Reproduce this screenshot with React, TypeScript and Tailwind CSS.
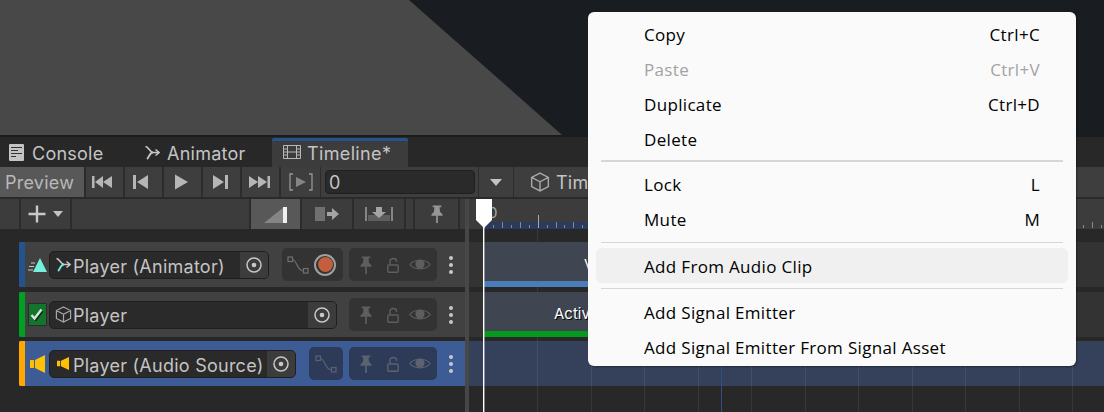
import React from 'react';

const uiFont = { fontFamily: 'Inter, "Liberation Sans", sans-serif' };

const Svg = ({ w, h, children, className }: { w: number; h: number; children: React.ReactNode; className?: string }) => (
  <svg width={w} height={h} viewBox={`0 0 ${w} ${h}`} fill="none" className={className}>
    {children}
  </svg>
);

const ConsoleIcon = () => (
  <Svg w={15} h={17}>
    <rect x="0" y="0" width="15" height="17" rx="1" fill="#c4c4c4" />
    <path d="M2 3.5H13M2 6.5H9M2 9.5H13M2 12.5H7" stroke="#333" strokeWidth="1.2" />
  </Svg>
);

const AnimatorIcon = ({ lower = '#c4c4c4', size = 15 }: { lower?: string; size?: number }) => (
  <svg width={size} height={size} viewBox="0 0 15 15" fill="none">
    <path d="M0.5 1.5C3.5 1.5 5 7.5 8 7.5H14" stroke="#c8c8c8" strokeWidth="1.6" />
    <path d="M2 14C4 12.5 4.5 7.5 8 7.5" stroke={lower} strokeWidth="1.9" />
    <path d="M10.5 4.5L14 7.5L10.5 10.5" stroke="#c8c8c8" strokeWidth="1.5" />
  </svg>
);

const FilmIcon = () => (
  <Svg w={18} h={16}>
    <path d="M0.5 1.5H17.5V14.5H0.5ZM4.5 1.5V14.5M13.5 1.5V14.5M4.5 8H13.5M0.5 5H4.5M0.5 8H4.5M0.5 11H4.5M13.5 5H17.5M13.5 8H17.5M13.5 11H17.5" stroke="#b8b8b8" strokeWidth="1" />
  </Svg>
);

const CubeIcon = ({ size = 18, color = '#a8a8a8' }: { size?: number; color?: string }) => (
  <svg width={size} height={size} viewBox="0 0 18 18" fill="none">
    <path d="M9 1L16.5 4.8V13.2L9 17L1.5 13.2V4.8ZM1.5 4.8L9 8.8L16.5 4.8M9 8.8V17" stroke={color} strokeWidth="1.3" />
  </svg>
);

const Transport = ({ d }: { d: string }) => (
  <Svg w={22} h={16}>
    <path d={d} fill="#b6b6b6" />
  </Svg>
);

const transportButtons = [
  { d: 'M0 2H2.5V14H0ZM3 8L11 2V14ZM11 8L20 2V14Z' },
  { d: 'M2 1H5V15H2ZM6 8L17 1V15Z' },
  { d: 'M5 0.5L18 8L5 15.5Z' },
  { d: 'M4 1L15 8L4 15ZM16 1H19V15H16Z' },
  { d: 'M1 2L10 8L1 14ZM10 2L19 8L10 14ZM19.5 2H22V14H19.5Z' },
];

const PinIcon = ({ color = '#5e5e5e', w = 12, h = 18 }: { color?: string; w?: number; h?: number }) => (
  <svg width={w} height={h} viewBox="0 0 14 21" fill="none">
    <path d="M2 0.5H12V2.5H10L10.5 8L13.5 11V12.5H0.5V11L3.5 8L4 2.5H2Z" fill={color} />
    <rect x="6" y="12" width="2" height="9" fill={color} />
  </svg>
);

const LockIcon = ({ color = '#5e5e5e' }: { color?: string }) => (
  <Svg w={12} h={16}>
    <path d="M3 7.5V3.8C3 0.8 9.5 0.8 9.5 3.8V5" stroke={color} strokeWidth="1.4" />
    <rect x="0.8" y="8" width="10.4" height="7.2" rx="1" stroke={color} strokeWidth="1.4" />
  </Svg>
);

const EyeIcon = ({ color = '#5e5e5e' }: { color?: string }) => (
  <Svg w={22} h={13}>
    <path d="M0.8 6.5C5 0.8 17 0.8 21.2 6.5C17 12.2 5 12.2 0.8 6.5Z" stroke={color} strokeWidth="1.2" />
    <circle cx="11" cy="6" r="4.6" fill={color} />
  </Svg>
);

const CurveIcon = ({ color = '#707070' }: { color?: string }) => (
  <Svg w={22} h={18}>
    <rect x="1" y="1" width="4.5" height="4.5" stroke={color} strokeWidth="1.2" />
    <rect x="16.5" y="12.5" width="4.5" height="4.5" stroke={color} strokeWidth="1.2" />
    <path d="M5.5 3.5C10 4 10 15 16.5 15" stroke={color} strokeWidth="1.2" />
  </Svg>
);

const TargetDot = () => (
  <Svg w={16} h={16}>
    <circle cx="8" cy="8" r="7" stroke="#c8c8c8" strokeWidth="1.5" />
    <circle cx="8" cy="8" r="2.3" fill="#c8c8c8" />
  </Svg>
);

const Speaker = ({ w, h }: { w: number; h: number }) => (
  <svg width={w} height={h} viewBox="0 0 15 16" fill="none" preserveAspectRatio="none">
    <path d="M0 4.5H4V11.5H0Z" fill="#ffc107" />
    <path d="M5 4.5L15 0V16L5 11.5Z" fill="#ffc107" />
  </svg>
);

const tracks = [
  {
    name: 'Player (Animator)',
    strip: 'bg-[#24548c]',
    row: 'bg-[#414141]',
    group: 'bg-[#333333]',
    iconTone: '#5e5e5e',
    field: 'w-[220px]',
    text: 'pt-[4px]',
    curve: 'w-[61px] pl-[5px]',
    record: true,
    gap: '',
    timeline: 'bg-[#333333]',
    clip: { text: 'V', pad: 'pl-[100px] pt-[8px]', bar: 'bg-[#4a7cb8]' },
  },
  {
    name: 'Player',
    strip: 'bg-[#00a023]',
    row: 'bg-[#414141]',
    group: 'bg-[#333333]',
    iconTone: '#5e5e5e',
    field: 'w-[288px]',
    text: 'pt-[2px]',
    curve: '',
    record: false,
    gap: 'mt-[5px]',
    timeline: 'bg-[#333333]',
    clip: { text: 'Active', pad: 'pl-[70px] pt-[6px]', bar: 'bg-[#059a1e]' },
  },
  {
    name: 'Player (Audio Source)',
    strip: 'bg-[#ffa800]',
    row: 'bg-[#3d5c96]',
    group: 'bg-[#2d3a58]',
    iconTone: '#5c6270',
    field: 'w-[247px]',
    text: 'pt-[4px]',
    curve: 'w-[34px] pl-[6px]',
    record: false,
    gap: 'mt-[4px]',
    timeline: 'bg-[#35415a]',
    clip: null,
  },
];

const TrackIcon = ({ index }: { index: number }) => {
  if (index === 0) {
    return (
      <Svg w={19} h={16}>
        <path d="M3 6H7M1 9.5H6M0 13H5" stroke="#c8c8c8" strokeWidth="1" />
        <path d="M12 1L19 15H5Z" fill="#75f0dc" />
      </Svg>
    );
  }
  if (index === 1) {
    return (
      <div className="w-[19px] h-[23px] bg-[#13752b] border border-[#2b2b2b] flex items-center justify-center">
        <Svg w={14} h={13}>
          <path d="M2.5 8.5L5.5 12L12.5 3" stroke="#0a2a12" strokeWidth="2.4" />
          <path d="M1.5 7L4.5 10.5L11.5 1.5" stroke="#d5e4d8" strokeWidth="2.4" />
        </Svg>
      </div>
    );
  }
  return <Speaker w={15} h={18} />;
};

const FieldIcon = ({ index }: { index: number }) => {
  if (index === 0) return <AnimatorIcon lower="#73ecd8" />;
  if (index === 1) return <CubeIcon size={17} />;
  return <Speaker w={12} h={13} />;
};

const TrackHeader = ({ track, index }: { track: (typeof tracks)[number]; index: number }) => (
  <div className={`flex items-center h-[45px] ml-[19px] ${track.row} ${track.gap}`}>
    <div className={`w-[6px] h-full rounded-l-[2px] shrink-0 ${track.strip}`} />
    <div className="w-[24px] flex items-center justify-center shrink-0">
      <TrackIcon index={index} />
    </div>
    <div className={`${track.field} h-[28px] shrink-0 flex items-center bg-[#2a2a2a] border border-[#1f1f1f] rounded-[5px] overflow-hidden`}>
      <div className="w-[23px] pl-[3px] flex items-center justify-center shrink-0">
        <FieldIcon index={index} />
      </div>
      <span className={`flex-1 ${track.text} text-[18px] tracking-[0.25px] text-[#c4c4c4] whitespace-nowrap`}>{track.name}</span>
      <div className="w-[28px] h-full bg-[#3c3c3c] flex items-center justify-center shrink-0">
        <TargetDot />
      </div>
    </div>
    <div className="flex-1" />
    {track.curve && (
      <div className={`${track.curve} h-[33px] mr-[6px] rounded-[5px] ${track.group} flex items-center gap-[5px] shrink-0`}>
        <CurveIcon color={index === 2 ? '#5c6270' : '#707070'} />
        {track.record && (
          <div className="w-[22px] h-[22px] rounded-full border-2 border-[#a0a0a0] flex items-center justify-center">
            <div className="w-[15px] h-[15px] rounded-full bg-[#c35f3c]" />
          </div>
        )}
      </div>
    )}
    <div className={`w-[88px] h-[33px] rounded-[5px] ${track.group} flex items-center pl-[11px] shrink-0`}>
      <PinIcon color={track.iconTone} />
      <div className="ml-[15px] flex">
        <LockIcon color={track.iconTone} />
      </div>
      <div className="ml-[10px] flex">
        <EyeIcon color={track.iconTone} />
      </div>
    </div>
    <div className="w-[28px] flex flex-col items-center gap-[3px] shrink-0">
      <div className="w-[4px] h-[4px] rounded-full bg-[#c8c8c8]" />
      <div className="w-[4px] h-[4px] rounded-full bg-[#c8c8c8]" />
      <div className="w-[4px] h-[4px] rounded-full bg-[#c8c8c8]" />
    </div>
  </div>
);

const TrackLane = ({ track }: { track: (typeof tracks)[number] }) => (
  <div className={`h-[45px] pl-[15px] ${track.timeline} ${track.gap}`}>
    {track.clip && (
      <div className="relative z-10 w-[540px] h-full flex flex-col">
        <div className={`flex-1 bg-[#404552] flex items-center text-[15px] text-white [text-shadow:1px_1px_0_#000] ${track.clip.pad}`}>
          {track.clip.text}
        </div>
        <div className={`h-[6px] ${track.clip.bar}`} />
      </div>
    )}
  </div>
);

const Ruler = () => {
  const ticks = Array.from({ length: 70 }, (_, i) => i);
  return (
    <svg width="635" height="30" className="absolute left-0 top-0">
      <rect x="15" y="23" width="280" height="7" fill="#2b3b5b" />
      {ticks.map((i) => {
        const x = 15 + i * 8.94;
        const h = i % 6 === 0 ? 13 : i % 2 === 0 ? 6 : 3;
        return <rect key={i} x={Math.round(x)} y={29 - h} width="1" height={h} fill={i % 6 === 0 ? '#a8a8a8' : '#808a9c'} />;
      })}
    </svg>
  );
};

const menuRows = [
  { label: 'Copy', key: 'Ctrl+C' },
  { label: 'Paste', key: 'Ctrl+V', disabled: true },
  { label: 'Duplicate', key: 'Ctrl+D' },
  { label: 'Delete' },
  { sep: 'pt-[3px] pb-[6px]' },
  { label: 'Lock', key: 'L' },
  { label: 'Mute', key: 'M' },
  { sep: 'pt-[4px] pb-[4.5px]' },
  { label: 'Add From Audio Clip', hover: true },
  { sep: 'pt-[5px] pb-[6.5px]' },
  { label: 'Add Signal Emitter' },
  { label: 'Add Signal Emitter From Signal Asset' },
];

const ContextMenu = () => (
  <div
    className="absolute left-[588px] top-[12px] w-[488px] h-[354px] z-30 bg-[#fafafa] rounded-[6px] pt-[5px] shadow-[1px_1px_2px_rgba(0,0,0,0.35)] text-[17px] tracking-[0.33px] text-black"
    style={{ fontFamily: '"Open Sans", "Noto Sans", sans-serif' }}
  >
    {menuRows.map((row, i) =>
      row.sep ? (
        <div key={i} className={row.sep}>
          <div className="mx-[13px] h-[1.5px] bg-[#d6d6d6]" />
        </div>
      ) : (
        <div
          key={i}
          className={`mx-[8px] h-[35px] pl-[48px] pr-[28px] flex items-center justify-between rounded-[6px] ${row.hover ? 'bg-[#f0f0f0] pt-[4px]' : ''} ${row.disabled ? 'text-[#a3a3a3]' : ''}`}
        >
          <span>{row.label}</span>
          {row.key && <span>{row.key}</span>}
        </div>
      )
    )}
  </div>
);

export default function App() {
  return (
    <div className="relative w-[1104px] h-[412px] overflow-hidden bg-[#282828] text-[#c4c4c4]" style={uiFont}>
      {/* Scene view */}
      <div className="h-[135px] bg-[#191c20]">
        <svg width="1104" height="135">
          <polygon points="0,0 409,0 562,135 0,135" fill="#484848" />
        </svg>
      </div>
      <div className="h-[2px] bg-[#1b1b1b]" />

      {/* Tabs */}
      <div className="h-[30px] flex items-end bg-[#282828] text-[18px] tracking-[0.25px]">
        <div className="w-[134px] h-full flex items-center pl-[9px] gap-[8px]">
          <ConsoleIcon />
          <span className="pt-[3px]">Console</span>
        </div>
        <div className="w-[138px] h-full flex items-center pl-[11px] gap-[7px]">
          <AnimatorIcon />
          <span className="pt-[3px]">Animator</span>
        </div>
        <div className="w-[136px] h-[29px] flex items-center pl-[11px] gap-[6px] bg-[#3c3c3c] border-t-[3px] border-[#24548c] rounded-t-[2px]">
          <div className="mb-[4px] flex">
            <FilmIcon />
          </div>
          <span className="pb-[2px] tracking-[0.35px]">Timeline*</span>
        </div>
      </div>

      {/* Transport toolbar */}
      <div className="h-[30px] flex items-center bg-[#3e3e3e]">
        <div className="w-[84px] h-full bg-[#585858] flex items-center pl-[5px] pt-[1px] text-[18px] tracking-[0.25px] text-[#b8b8b8]">Preview</div>
        {transportButtons.map((b, i) => (
          <div key={i} className="w-[39px] h-full border-l-2 border-[#2c2c2c] pr-[3px] flex items-center justify-center">
            <Transport d={b.d} />
          </div>
        ))}
        <div className="w-[41px] h-full border-l-2 border-[#2c2c2c] flex items-center justify-center">
          <Svg w={24} h={18}>
            <path d="M4 1H1V17H4M20 1H23V17H20" stroke="#969696" strokeWidth="1.3" />
            <path d="M7 4L17 9L7 14Z" fill="#858585" />
          </Svg>
        </div>
        <div className="h-full border-l border-[#2c2c2c] pl-[4px] flex items-center">
          <div className="w-[150px] h-[24px] bg-[#2a2a2a] border border-[#1f1f1f] rounded-[4px] pl-[3px] flex items-center text-[18px]">0</div>
        </div>
        <div className="ml-[3px] w-[35px] h-full border-l border-[#2c2c2c] flex items-center justify-center">
          <div className="w-0 h-0 border-x-[6px] border-x-transparent border-t-[7px] border-t-[#c4c4c4]" />
        </div>
        <div className="h-full border-l border-[#2c2c2c] pl-[16px] flex items-center gap-[6px] text-[18px] tracking-[0.25px]">
          <CubeIcon size={20} />
          <span className="pt-[1px]">Timeline</span>
        </div>
      </div>
      <div className="h-[2px] bg-[#2a2a2a]" />

      {/* Timeline body */}
      <div className="flex h-[213px]">
        <div className="w-[465px] shrink-0">
          <div className="h-[30px] flex bg-[#3c3c3c]">
            <div className="w-[19px]" />
            <div className="w-[53px] border-x-2 border-[#2c2c2c] flex items-center justify-center gap-[7px]">
              <Svg w={18} h={18}>
                <path d="M7.8 0.5H10.2V7.8H17.5V10.2H10.2V17.5H7.8V10.2H0.5V7.8H7.8Z" fill="#c8c8c8" />
              </Svg>
              <div className="w-0 h-0 border-x-[5.5px] border-x-transparent border-t-[6px] border-t-[#c4c4c4]" />
            </div>
            <div className="w-[177px]" />
            <div className="w-[51px] bg-[#585858] border-l-2 border-[#2c2c2c] flex items-center justify-center">
              <Svg w={24} h={17}>
                <path d="M0 17L20 1V17Z" fill="#858585" />
                <rect x="19" y="1" width="4" height="16" fill="#f0f0f0" />
              </Svg>
            </div>
            <div className="w-[52px] border-l-2 border-[#2c2c2c] flex items-center justify-center gap-[2px]">
              <Svg w={24} h={16}>
                <rect x="0" y="1" width="10" height="14" fill="#707070" />
                <path d="M12 6H17V2L24 8L17 14V10H12Z" fill="#a4a4a4" />
              </Svg>
            </div>
            <div className="w-[52px] border-l-2 border-[#2c2c2c] flex items-center justify-center">
              <Svg w={28} h={16}>
                <path d="M1 1V15M27 1V15" stroke="#858585" strokeWidth="2" />
                <rect x="3" y="9" width="22" height="6" fill="#5e5e5e" />
                <path d="M11 1H17V6H21L14 12L7 6H11Z" fill="#a4a4a4" />
              </Svg>
            </div>
            <div className="w-[9px] border-l-2 border-[#2c2c2c]" />
            <div className="w-[47px] border-x-2 border-[#2c2c2c] flex items-center justify-center">
              <PinIcon color="#969696" w={12} h={18} />
            </div>
            <div className="flex-1" />
          </div>
          <div className="pt-[13px]">
            {tracks.map((track, i) => (
              <TrackHeader key={track.name} track={track} index={i} />
            ))}
          </div>
        </div>

        {/* Splitter */}
        <div className="w-[4px] shrink-0 bg-[#474747]" />

        <div className="relative flex-1">
          <div className="relative h-[30px] bg-[#3c3c3c]">
            <span className="absolute left-[19px] top-[3px] text-[15px] text-[#a8a8a8]">0</span>
            <Ruler />
          </div>
          <div className="relative pt-[13px] h-[183px] bg-[#282828]">
            {tracks.map((track) => (
              <TrackLane key={track.name} track={track} />
            ))}
            <svg width="635" height="183" className="absolute left-0 top-0">
              {Array.from({ length: 11 }, (_, i) => (
                <rect key={i} x={Math.round(68 + i * 53.5)} y="0" width="1" height="183" fill="#ffffff" fillOpacity="0.08" />
              ))}
              <rect x="252" y="0" width="1" height="183" fill="#2f4f86" />
            </svg>
          </div>
          {/* Playhead */}
          <svg width="18" height="213" className="absolute left-[6px] top-0 z-20">
            <polygon points="1,0 17,0 17,21 9,29 1,21" fill="#ffffff" />
            <rect x="8" y="20" width="1.4" height="193" fill="#ffffff" />
          </svg>
        </div>
      </div>

      <ContextMenu />
    </div>
  );
}
